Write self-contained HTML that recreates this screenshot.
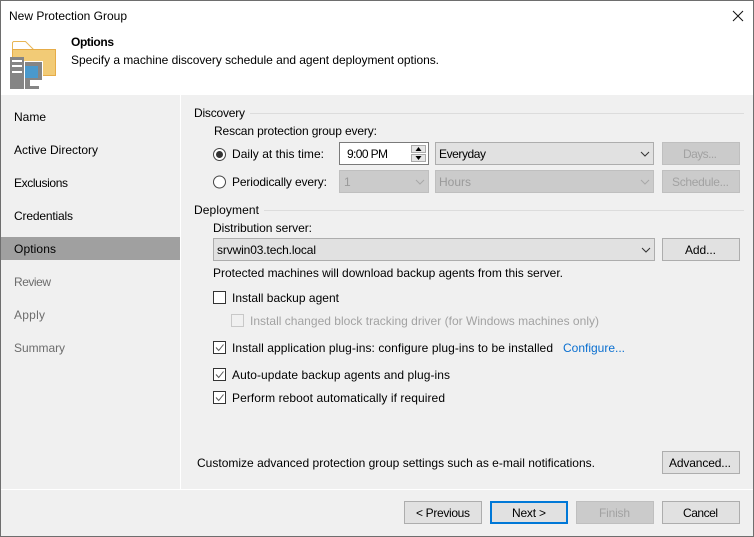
<!DOCTYPE html>
<html><head><meta charset="utf-8"><style>
html,body{margin:0;padding:0;background:#f0f0f0;overflow:hidden}
svg{display:block}
text{font-family:"Liberation Sans",sans-serif;font-size:12px;fill:#000}
.g{fill:#6d6d6d}.d{fill:#a2a2a2}.l{fill:#9a9a9a}
</style></head><body>
<svg width="754" height="537" viewBox="0 0 754 537" xmlns="http://www.w3.org/2000/svg" shape-rendering="crispEdges">
<rect width="754" height="537" fill="#f0f0f0"/>
<rect x="0" y="0" width="754" height="95" fill="#fff"/>
<rect x="180" y="95" width="1" height="394" fill="#fff"/>
<rect x="1" y="489" width="752" height="1" fill="#fff"/>
<rect x="1" y="237" width="179" height="23" fill="#a0a0a0"/>
<rect x="0.5" y="0.5" width="753" height="536" fill="none" stroke="#6e6e6e"/>
<text x="9" y="20" textLength="118">New Protection Group</text>
<path d="M733 11L743 21M743 11L733 21" stroke="#111" fill="none" shape-rendering="auto"/>

<!-- header icon -->
<path d="M12.500 50V42.500L13.500 41.500H25.500L33.500 49.500" fill="#fff" stroke="#e8b655" shape-rendering="auto"/>
<rect x="12.500" y="49.500" width="43" height="26" fill="#f2cb76" stroke="#e6ac48"/>
<rect x="24" y="61" width="19" height="29" fill="#fff"/>
<rect x="25" y="62" width="17" height="18" fill="#858585"/>
<rect x="25" y="66" width="13" height="12" fill="#4a99cc"/>
<rect x="25" y="80" width="5" height="6" fill="#858585"/>
<rect x="25" y="86" width="14" height="3" fill="#858585"/>
<rect x="30" y="80" width="13" height="6" fill="#fff"/>
<rect x="39" y="86" width="4" height="4" fill="#fff"/>
<rect x="10" y="57" width="14" height="32" fill="#858585"/>
<rect x="12" y="60" width="10" height="2" fill="#fff"/>
<rect x="12" y="65" width="10" height="2" fill="#fff"/>
<rect x="12" y="71" width="10" height="2" fill="#fff"/>

<text x="71" y="46" font-weight="bold" textLength="43">Options</text>
<text x="71" y="64" textLength="368">Specify a machine discovery schedule and agent deployment options.</text>

<!-- sidebar -->
<text x="14" y="121" textLength="32">Name</text>
<text x="14" y="154" textLength="84">Active Directory</text>
<text x="14" y="187" textLength="54">Exclusions</text>
<text x="14" y="220" textLength="59">Credentials</text>
<text x="14" y="253" textLength="42">Options</text>
<text x="14" y="286" textLength="37" class="g">Review</text>
<text x="14" y="319" textLength="31" class="g">Apply</text>
<text x="14" y="352" textLength="51" class="g">Summary</text>

<!-- discovery -->
<text x="194" y="117" textLength="51">Discovery</text>
<rect x="250" y="113" width="494" height="1" fill="#dcdcdc"/>
<text x="214" y="135" textLength="163">Rescan protection group every:</text>

<circle cx="219.500" cy="154.500" r="6" fill="#fff" stroke="#444" shape-rendering="auto"/>
<circle cx="219.500" cy="154.500" r="3.500" fill="#333" shape-rendering="auto"/>
<text x="232" y="158" textLength="92">Daily at this time:</text>
<circle cx="219.500" cy="182" r="6" fill="#fff" stroke="#444" shape-rendering="auto"/>
<text x="232" y="186" textLength="95">Periodically every:</text>

<rect x="339.500" y="142.500" width="89" height="22" fill="#fff" stroke="#7a7a7a"/>
<text x="347" y="158" textLength="41">9:00 PM</text>
<rect x="411.500" y="145.500" width="14" height="7" fill="#e6e6e6" stroke="#aaa"/>
<rect x="411.500" y="154.500" width="14" height="7" fill="#e6e6e6" stroke="#aaa"/>
<path d="M418.500 147L415.500 151H421.500Z" fill="#000" shape-rendering="auto"/>
<path d="M418.500 160L415.500 156H421.500Z" fill="#000" shape-rendering="auto"/>

<rect x="435.500" y="142.500" width="218" height="22" fill="#e1e1e1" stroke="#adadad"/>
<text x="439" y="158" textLength="47">Everyday</text>
<path d="M641 152L645 156L649 152" fill="none" stroke="#333" shape-rendering="auto"/>
<rect x="662.500" y="142.500" width="77" height="22" fill="#cbcbcb" stroke="#bfbfbf"/>
<text x="683" y="158" textLength="34" class="d">Days...</text>

<rect x="339.500" y="170.500" width="89" height="22" fill="#cbcbcb" stroke="#bfbfbf"/>
<text x="344" y="186" textLength="6" class="l">1</text>
<path d="M416 180L420 184L424 180" fill="none" stroke="#a8a8a8" shape-rendering="auto"/>
<rect x="435.500" y="170.500" width="218" height="22" fill="#cbcbcb" stroke="#bfbfbf"/>
<text x="439" y="186" textLength="32" class="l">Hours</text>
<path d="M641 180L645 184L649 180" fill="none" stroke="#a8a8a8" shape-rendering="auto"/>
<rect x="662.500" y="170.500" width="77" height="22" fill="#cbcbcb" stroke="#bfbfbf"/>
<text x="672" y="186" textLength="57" class="d">Schedule...</text>

<!-- deployment -->
<text x="194" y="214" textLength="65">Deployment</text>
<rect x="264" y="210" width="480" height="1" fill="#dcdcdc"/>
<text x="213" y="232" textLength="99">Distribution server:</text>
<rect x="213.500" y="238.500" width="441" height="22" fill="#e1e1e1" stroke="#adadad"/>
<text x="217" y="254" textLength="99">srvwin03.tech.local</text>
<path d="M642 248L646 252L650 248" fill="none" stroke="#333" shape-rendering="auto"/>
<rect x="662.500" y="238.500" width="77" height="22" fill="#e1e1e1" stroke="#adadad"/>
<text x="685" y="254" textLength="31">Add...</text>
<text x="213" y="277" textLength="350">Protected machines will download backup agents from this server.</text>

<rect x="213.500" y="291.500" width="12" height="12" fill="#fff" stroke="#333"/>
<text x="232" y="302" textLength="107">Install backup agent</text>
<rect x="231.500" y="314.500" width="12" height="12" fill="#f0f0f0" stroke="#c8c8c8"/>
<text x="250" y="325" textLength="349" class="d">Install changed block tracking driver (for Windows machines only)</text>
<rect x="213.500" y="341.500" width="12" height="12" fill="#fff" stroke="#333"/>
<path d="M216 347.500L218.700 350.500L223.500 344.500" fill="none" stroke="#555" shape-rendering="auto"/>
<text x="232" y="352" textLength="321">Install application plug-ins: configure plug-ins to be installed</text>
<text x="563" y="352" textLength="62" style="fill:#0a6fd0">Configure...</text>
<rect x="213.500" y="368.500" width="12" height="12" fill="#fff" stroke="#333"/>
<path d="M216 374.500L218.700 377.500L223.500 371.500" fill="none" stroke="#555" shape-rendering="auto"/>
<text x="232" y="379" textLength="218">Auto-update backup agents and plug-ins</text>
<rect x="213.500" y="391.500" width="12" height="12" fill="#fff" stroke="#333"/>
<path d="M216 397.500L218.700 400.500L223.500 394.500" fill="none" stroke="#555" shape-rendering="auto"/>
<text x="232" y="402" textLength="213">Perform reboot automatically if required</text>

<text x="197" y="467" textLength="398">Customize advanced protection group settings such as e-mail notifications.</text>
<rect x="662.500" y="451.500" width="77" height="22" fill="#e1e1e1" stroke="#adadad"/>
<text x="669" y="467" textLength="62">Advanced...</text>

<!-- footer -->
<rect x="404.500" y="501.500" width="77" height="22" fill="#e1e1e1" stroke="#adadad"/>
<text x="416" y="517" textLength="54">&lt; Previous</text>
<rect x="491" y="502" width="76" height="21" fill="#e1e1e1" stroke="#0078d7" stroke-width="2"/>
<text x="512" y="517" textLength="34">Next &gt;</text>
<rect x="576.500" y="501.500" width="77" height="22" fill="#cbcbcb" stroke="#bfbfbf"/>
<text x="599" y="517" textLength="31" class="d">Finish</text>
<rect x="662.500" y="501.500" width="77" height="22" fill="#e1e1e1" stroke="#adadad"/>
<text x="683" y="517" textLength="35">Cancel</text>
</svg>
</body></html>
